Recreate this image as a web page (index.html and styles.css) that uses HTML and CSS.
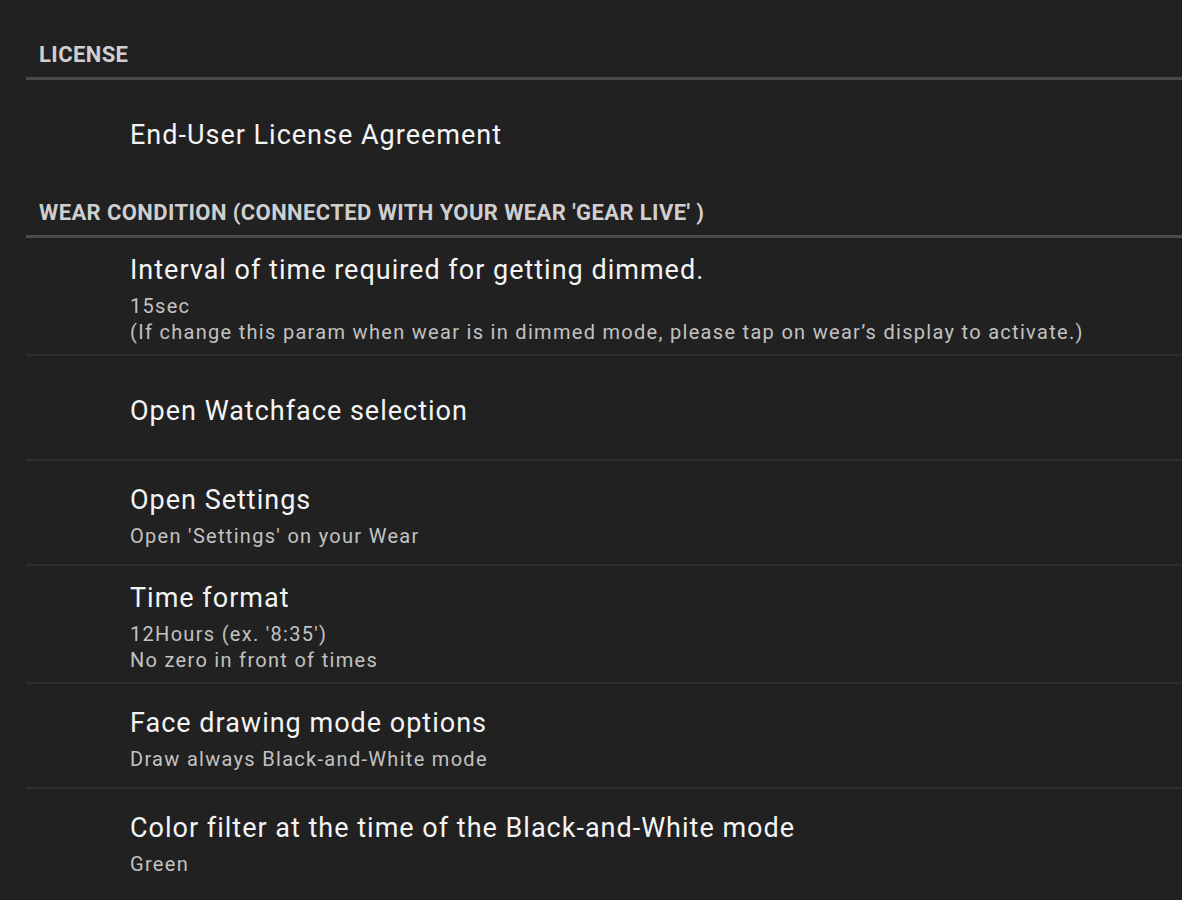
FILE: index.html
```html
<!DOCTYPE html>
<html>
<head>
<meta charset="utf-8">
<link rel="stylesheet" href="styles.css">
</head>
<body>
<div class="prefs">
  <section class="category">
    <div class="cat-header">LICENSE</div>
    <div class="item">
      <div class="title">End-User License Agreement</div>
    </div>
  </section>
  <section class="category">
    <div class="cat-header">WEAR CONDITION (CONNECTED WITH YOUR WEAR 'GEAR LIVE' )</div>
    <div class="item">
      <div class="title">Interval of time required for getting dimmed.</div>
      <div class="summary">15sec<br>(If change this param when wear is in dimmed mode, please tap on wear’s display to activate.)</div>
    </div>
    <div class="item">
      <div class="title">Open Watchface selection</div>
    </div>
    <div class="item">
      <div class="title">Open Settings</div>
      <div class="summary">Open 'Settings' on your Wear</div>
    </div>
    <div class="item">
      <div class="title">Time format</div>
      <div class="summary">12Hours (ex. '8:35')<br>No zero in front of times</div>
    </div>
    <div class="item">
      <div class="title">Face drawing mode options</div>
      <div class="summary">Draw always Black-and-White mode</div>
    </div>
    <div class="item">
      <div class="title">Color filter at the time of the Black-and-White mode</div>
      <div class="summary">Green</div>
    </div>
  </section>
</div>
</body>
</html>
```

FILE: styles.css
```css
* { box-sizing: border-box; }
html, body {
  margin: 0;
  padding: 0;
  background: #212121;
  height: 100%;
  overflow: hidden;
}
body {
  font-family: Roboto, "Noto Sans", "Liberation Sans", sans-serif;
}
.prefs {
  padding-top: 26px;
  padding-left: 26px;
}
.cat-header {
  height: 54px;
  padding: 16px 0 0 13px;
  font-size: 22px;
  line-height: 25px;
  letter-spacing: 0.4px;
  font-weight: 700;
  color: #cfcfcf;
  border-bottom: 3px solid #4a4a4a;
}
.item {
  min-height: 104px;
  padding: 15px 0 9px 104px;
  display: flex;
  flex-direction: column;
  justify-content: center;
}
.item + .item {
  min-height: 105px;
  border-top: 2px solid #2e2e2e;
}
.title {
  font-size: 27px;
  line-height: 34px;
  letter-spacing: 1px;
  color: #f4f4f4;
}
.summary {
  margin-top: 6px;
  font-size: 20px;
  line-height: 26px;
  letter-spacing: 1.3px;
  color: #c2c2c2;
}
```
